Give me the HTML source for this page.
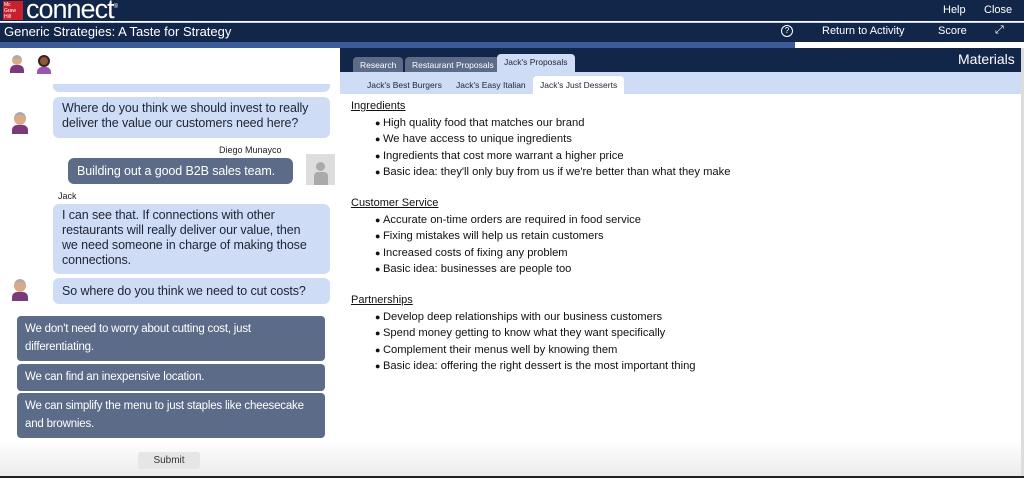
<!DOCTYPE html><html><head><style>
*{box-sizing:border-box;margin:0;padding:0}
body{width:1024px;height:478px;overflow:hidden;background:#fff;font-family:"Liberation Sans",sans-serif;position:relative}
.a{position:absolute}
.top{left:0;top:0;width:1024px;height:21px;background:#12264a}
.t2{left:0;top:22px;width:1024px;height:20px;background:#12264a;border-top:1px solid #c8d0dc}
.pb{left:0;top:42px;width:795px;height:6px;background:#3a5a98}
.pw{left:795px;top:42px;width:229px;height:6px;background:#fff}
.w{color:#fff;font-size:11px}
.bub{background:#cfdcf6;border-radius:6px;color:#1d2433;font-size:12.5px;letter-spacing:-0.1px;line-height:15px;padding:4px 9px;white-space:nowrap}
.opt{background:#5c6b88;border-radius:4px;color:#fff;font-size:11.5px;letter-spacing:-0.2px;line-height:18px;padding:4px 8px;left:17px;width:308px;white-space:nowrap}
.av{width:18px;height:22px}
.rp{left:340px;top:48px;width:684px;height:24px;background:#12264a}
.tab{top:57px;height:15px;font-size:8.5px;color:#fff;background:#5c6b88;border-radius:4px 4px 0 0;padding:3px 7px 0;}
.sub{left:340px;top:72px;width:684px;height:22px;background:#cfdcf6}
.st{top:76px;font-size:8.5px;color:#1d2433;height:18px;padding:4px 7px}
.sec{left:351px;font-size:11px;text-decoration:underline;color:#111}
ul{position:absolute;left:375px;font-size:11.2px;color:#111;list-style:none;line-height:16.3px}
ul li:before{content:"● ";font-size:9px}
</style></head><body>
<div class="a top"></div>
<div class="a" style="left:3px;top:1px;width:20px;height:19px;background:#c8202c;color:#fff;font-size:5px;line-height:6px;padding:1px">Mc<br>Graw<br>Hill</div>
<div class="a" style="left:26px;top:-6px;color:#fff;font-size:27px;letter-spacing:-1px">connect<sup style="font-size:6px">®</sup></div>
<div class="a w" style="left:943px;top:4px">Help</div>
<div class="a w" style="left:984px;top:4px">Close</div>
<div class="a t2"></div>
<div class="a" style="left:4px;top:24px;color:#fff;font-size:13px">Generic Strategies: A Taste for Strategy</div>
<div class="a w" style="left:781px;top:25px;width:12px;height:12px;border:1px solid #fff;border-radius:50%;font-size:8px;text-align:center;line-height:10px">?</div>
<div class="a w" style="left:822px;top:25px">Return to Activity</div>
<div class="a w" style="left:938px;top:25px">Score</div>
<div class="a w" style="left:995px;top:24px">⤢</div>
<div class="a pb"></div><div class="a pw"></div>
<div class="a" style="left:0;top:440px;width:1024px;height:36px;background:linear-gradient(#fff0,#ececec)"></div>
<div class="a" style="left:0;top:476px;width:1024px;height:2px;background:#222"></div>
<!-- chat -->
<div class="a av" style="left:8px;top:55px"><div style="width:10px;height:10px;margin:0 auto;border-radius:50%;background:#d9a98a;border-top:3px solid #aaa"></div><div style="width:14px;height:8px;margin:0 auto;background:#7b3a78;border-radius:5px 5px 0 0"></div></div>
<div class="a av" style="left:35px;top:55px"><div style="width:12px;height:12px;margin:0 auto;border-radius:50%;background:#8a5a3a;border:2px solid #3a2218"></div><div style="width:14px;height:7px;margin:0 auto;background:#9a55b0;border-radius:5px 5px 0 0"></div></div>
<div class="a bub" style="left:53px;top:84px;width:277px;height:8px;border-radius:0 0 6px 6px"></div>
<div class="a bub" style="left:53px;top:97px;width:277px;height:41px">Where do you think we should invest to really<br>deliver the value our customers need here?</div>
<div class="a av" style="left:11px;top:112px"><div style="width:12px;height:13px;margin:0 auto;border-radius:50%;background:#d9a98a;border-top:3px solid #aaa"></div><div style="width:16px;height:9px;margin:0 auto;background:#7b3a78;border-radius:5px 5px 0 0"></div></div>
<div class="a" style="left:219px;top:145px;font-size:9px;color:#222">Diego Munayco</div>
<div class="a bub" style="left:68px;top:158px;width:225px;height:26px;background:#5c6b88;color:#fff;line-height:18px">Building out a good B2B sales team.</div>
<div class="a" style="left:306px;top:154px;width:29px;height:31px;background:#ddd"><div style="width:9px;height:9px;border-radius:50%;background:#aaa;margin:8px auto 1px"></div><div style="width:14px;height:13px;background:#aaa;margin:0 auto;border-radius:4px 4px 0 0"></div></div>
<div class="a" style="left:58px;top:191px;font-size:9px;color:#222">Jack</div>
<div class="a bub" style="left:53px;top:204px;width:277px;height:70px">I can see that. If connections with other<br>restaurants will really deliver our value, then<br>we need someone in charge of making those<br>connections.</div>
<div class="a bub" style="left:53px;top:278px;width:277px;height:26px;line-height:18px">So where do you think we need to cut costs?</div>
<div class="a av" style="left:11px;top:279px"><div style="width:12px;height:13px;margin:0 auto;border-radius:50%;background:#d9a98a;border-top:3px solid #aaa"></div><div style="width:16px;height:9px;margin:0 auto;background:#7b3a78;border-radius:5px 5px 0 0"></div></div>
<div class="a opt" style="top:316px;height:45px">We don't need to worry about cutting cost, just<br>differentiating.</div>
<div class="a opt" style="top:364px;height:27px">We can find an inexpensive location.</div>
<div class="a opt" style="top:393px;height:45px">We can simplify the menu to just staples like cheesecake<br>and brownies.</div>
<div class="a" style="left:138px;top:452px;width:62px;height:17px;background:#e6e6e6;border-radius:3px;font-size:10px;text-align:center;line-height:17px;color:#333">Submit</div>
<!-- right -->
<div class="a rp"></div>
<div class="a" style="left:958px;top:51px;color:#fff;font-size:14px">Materials</div>
<div class="a tab" style="left:353px">Research</div>
<div class="a tab" style="left:405px">Restaurant Proposals</div>
<div class="a tab" style="left:497px;top:54px;height:18px;background:#cfdcf6;color:#1d2433">Jack's Proposals</div>
<div class="a sub"></div>
<div class="a st" style="left:360px">Jack's Best Burgers</div>
<div class="a st" style="left:449px">Jack's Easy Italian</div>
<div class="a st" style="left:533px;background:#fff;border-radius:4px 4px 0 0">Jack's Just Desserts</div>
<div class="a sec" style="top:100px">Ingredients</div>
<ul style="top:115px"><li>High quality food that matches our brand</li><li>We have access to unique ingredients</li><li>Ingredients that cost more warrant a higher price</li><li>Basic idea: they'll only buy from us if we're better than what they make</li></ul>
<div class="a sec" style="top:197px">Customer Service </div>
<ul style="top:212px"><li>Accurate on-time orders are required in food service</li><li>Fixing mistakes will help us retain customers</li><li>Increased costs of fixing any problem</li><li>Basic idea: businesses are people too</li></ul>
<div class="a sec" style="top:294px">Partnerships</div>
<ul style="top:309px"><li>Develop deep relationships with our business customers</li><li>Spend money getting to know what they want specifically</li><li>Complement their menus well by knowing them</li><li>Basic idea: offering the right dessert is the most important thing</li></ul>
<div class="a" style="left:1021px;top:48px;width:3px;height:428px;background:#ddd"></div>
</body></html>
